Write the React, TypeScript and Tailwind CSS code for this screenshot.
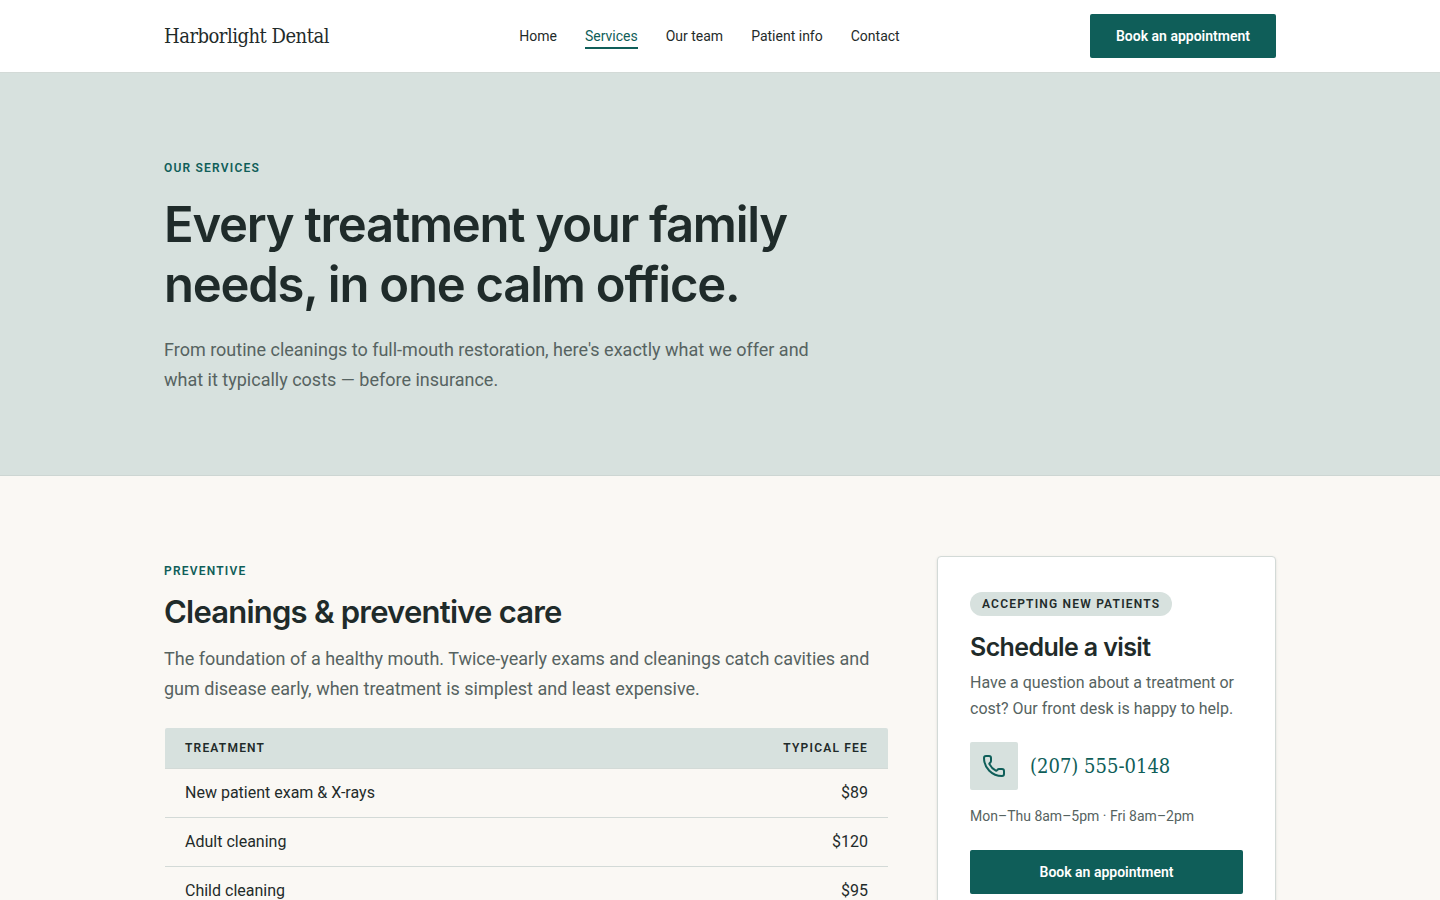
import { Phone } from "lucide-react";

const navLinks = [
  { label: "Home", active: false },
  { label: "Services", active: true },
  { label: "Our team", active: false },
  { label: "Patient info", active: false },
  { label: "Contact", active: false },
];

const fees = [
  { treatment: "New patient exam & X-rays", fee: "$89" },
  { treatment: "Adult cleaning", fee: "$120" },
  { treatment: "Child cleaning", fee: "$95" },
];

function Header() {
  return (
    <header className="border-b border-[#d3dad7] bg-white">
      <div className="mx-auto flex h-[72px] max-w-[1160px] items-center justify-between px-6">
        <a
          href="#home"
          className="font-['DejaVu_Serif_Condensed','DejaVu_Serif',serif] text-xl tracking-tight"
        >
          Harborlight Dental
        </a>
        <nav aria-label="Main" className="flex gap-7 text-sm leading-5">
          {navLinks.map((link) => (
            <a
              key={link.label}
              href="#nav"
              aria-current={link.active ? "page" : undefined}
              className={
                link.active
                  ? "border-y-2 border-t-transparent border-b-[#0f5e59] py-px text-[#0f5e59]"
                  : "border-y-2 border-transparent py-px"
              }
            >
              {link.label}
            </a>
          ))}
        </nav>
        <button
          type="button"
          className="h-11 rounded-xs bg-[#0f5e59] px-[26px] text-sm font-semibold text-white"
        >
          Book an appointment
        </button>
      </div>
    </header>
  );
}

function Eyebrow({ children }: { children: string }) {
  return (
    <p className="text-xs leading-[30px] font-semibold tracking-widest text-[#0f5e59] uppercase">
      {children}
    </p>
  );
}

function Hero() {
  return (
    <section className="border-b border-[#cdd6d3] bg-[#d7e1de]">
      <div className="mx-auto max-w-[1160px] px-6 py-20">
        <Eyebrow>Our services</Eyebrow>
        <h1 className="mt-3 max-w-[720px] font-[Inter,sans-serif] text-[49px] leading-[60px] font-semibold tracking-tight">
          Every treatment your family needs, in one calm office.
        </h1>
        <p className="mt-5 max-w-[680px] text-lg leading-[30px] text-[#566361]">
          From routine cleanings to full-mouth restoration, here's exactly what we offer and what it
          typically costs — before insurance.
        </p>
      </div>
    </section>
  );
}

function FeeTable() {
  return (
    <div className="mt-6 px-px">
      <table className="w-full border-separate border-spacing-0 text-base leading-6">
        <thead>
          <tr className="text-xs leading-4 tracking-widest uppercase">
            <th
              scope="col"
              className="rounded-tl-xs border-b border-[#d3dad7] bg-[#d7e1de] px-5 py-3 text-left font-semibold"
            >
              Treatment
            </th>
            <th
              scope="col"
              className="rounded-tr-xs border-b border-[#d3dad7] bg-[#d7e1de] px-5 py-3 text-right font-semibold"
            >
              Typical fee
            </th>
          </tr>
        </thead>
        <tbody>
          {fees.map((row) => (
            <tr key={row.treatment}>
              <td className="border-b border-[#d3dad7] px-5 py-3">{row.treatment}</td>
              <td className="border-b border-[#d3dad7] px-5 py-3 text-right">{row.fee}</td>
            </tr>
          ))}
        </tbody>
      </table>
    </div>
  );
}

function ScheduleCard() {
  return (
    <aside className="self-start rounded border border-[#d3dad7] bg-white px-8 pt-[35px] pb-8 shadow-sm">
      <p className="w-fit rounded-full bg-[#d7e1de] px-3 text-xs leading-6 font-semibold tracking-widest uppercase">
        Accepting new patients
      </p>
      <h3 className="mt-4 font-[Inter,sans-serif] text-[25px] leading-[30px] font-semibold tracking-tight">
        Schedule a visit
      </h3>
      <p className="mt-2 leading-[26px] text-[#566361]">
        Have a question about a treatment or cost? Our front desk is happy to help.
      </p>
      <a href="tel:2075550148" className="mt-5 flex items-center gap-3 text-[#0f5e59]">
        <span className="flex size-12 items-center justify-center rounded-xs bg-[#d7e1de]">
          <Phone className="size-6" strokeWidth={2} aria-hidden="true" />
        </span>
        <span className="font-['DejaVu_Serif_Condensed','DejaVu_Serif',serif] text-xl">
          (207) 555-0148
        </span>
      </a>
      <p className="mt-4 text-sm leading-5 text-[#566361]">Mon–Thu 8am–5pm · Fri 8am–2pm</p>
      <button
        type="button"
        className="mt-6 h-11 w-full rounded-xs bg-[#0f5e59] text-sm font-semibold text-white"
      >
        Book an appointment
      </button>
    </aside>
  );
}

export default function App() {
  return (
    <div className="min-h-screen bg-[#faf8f4] font-[Roboto,sans-serif] text-[#1f2b2a]">
      <Header />
      <main>
        <Hero />
        <div className="mx-auto grid max-w-[1160px] grid-cols-[minmax(0,1fr)_339px] gap-12 px-6 py-20">
          <section>
            <Eyebrow>Preventive</Eyebrow>
            <h2 className="mt-2 font-[Inter,sans-serif] text-[31px] leading-9 font-semibold tracking-tight">
              Cleanings &amp; preventive care
            </h2>
            <p className="mt-3.5 text-lg leading-[30px] text-[#566361]">
              The foundation of a healthy mouth. Twice-yearly exams and cleanings catch cavities and
              gum disease early, when treatment is simplest and least expensive.
            </p>
            <FeeTable />
          </section>
          <ScheduleCard />
        </div>
      </main>
    </div>
  );
}
